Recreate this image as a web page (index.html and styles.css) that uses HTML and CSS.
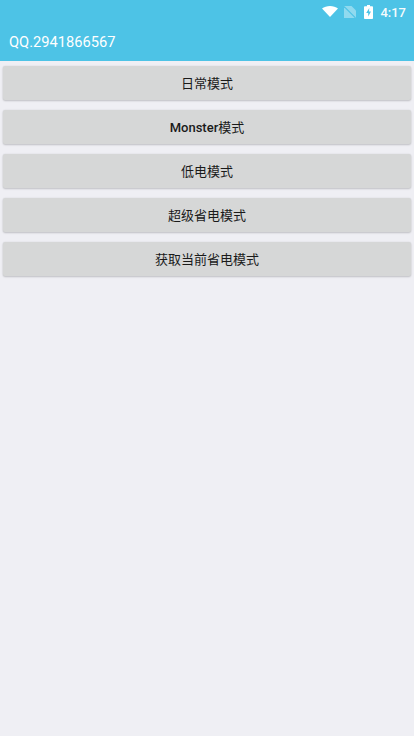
FILE: index.html
```html
<!DOCTYPE html>
<html lang="zh">
<head>
<meta charset="utf-8">
<title>QQ.2941866567</title>
<link rel="stylesheet" href="styles.css">
</head>
<body>
<header class="appbar">
  <div class="status">
    <svg class="ico wifi" width="16" height="11" viewBox="0 0 18 14" preserveAspectRatio="none"><path d="M0 3.200C2.400 1.200 5.500 0 9 0s6.600 1.200 9 3.200L9 14z" fill="#fff"/></svg>
    <svg class="ico sim" width="12" height="12" viewBox="0 0 12 12"><path d="M0 0h7.500L12 4.500V12H0z" fill="#fff" opacity=".38"/><path d="M0 .5L11.500 12" stroke="#4dc3e6" stroke-width="1.100"/></svg>
    <svg class="ico batt" width="9" height="14" viewBox="0 0 9 14"><path fill-rule="evenodd" d="M3 0h3v1.200h2.200c.4 0 .8.3.8.8v11.200c0 .5-.4.8-.8.8H.8c-.4 0-.8-.3-.8-.8V2c0-.5.4-.8.8-.8H3zM5.300 3L2.200 8h2v3.600L7 6.500H5z" fill="#fff"/></svg>
    <span class="time">4:17</span>
  </div>
  <div class="title">QQ.2941866567</div>
</header>
<main class="list">
  <button class="btn">日常模式</button>
  <button class="btn"><span class="latin">Monster</span>模式</button>
  <button class="btn">低电模式</button>
  <button class="btn">超级省电模式</button>
  <button class="btn">获取当前省电模式</button>
</main>
</body>
</html>
```
FILE: styles.css
```css
* { box-sizing: border-box; }
html, body { margin: 0; height: 100%; }
body {
  background: #efeff4;
  font-family: Roboto, "Noto Sans CJK SC", sans-serif;
  overflow: hidden;
}
.appbar { background: #4dc3e6; height: 61px; color: #fff; }
.status {
  height: 24px;
  display: flex;
  align-items: center;
  justify-content: flex-end;
  padding-right: 8px;
}
.ico { display: block; flex: none; }
.wifi { margin-right: 6px; margin-top: -2px; }
.sim { margin-right: 8px; margin-top: -1px; }
.batt { margin-right: 7px; }
.time { font-size: 13px; font-weight: 500; opacity: .95; }
.title {
  height: 37px;
  padding-left: 9px;
  font-size: 14.700px;
  line-height: 36px;
}
.list {
  display: flex;
  flex-direction: column;
  gap: 10px;
  padding: 5px 3px 0;
}
.btn {
  height: 34px;
  border: 0;
  padding: 0 0 2px;
  border-radius: 2px;
  background: #d6d7d7;
  color: #1a1a1a;
  font: 13px Roboto, "Noto Sans CJK SC", sans-serif;
  box-shadow: 0 1px 2px rgba(0,0,0,.18), 0 0 2px rgba(0,0,0,.08);
}
.latin { font-weight: 500; }
```
